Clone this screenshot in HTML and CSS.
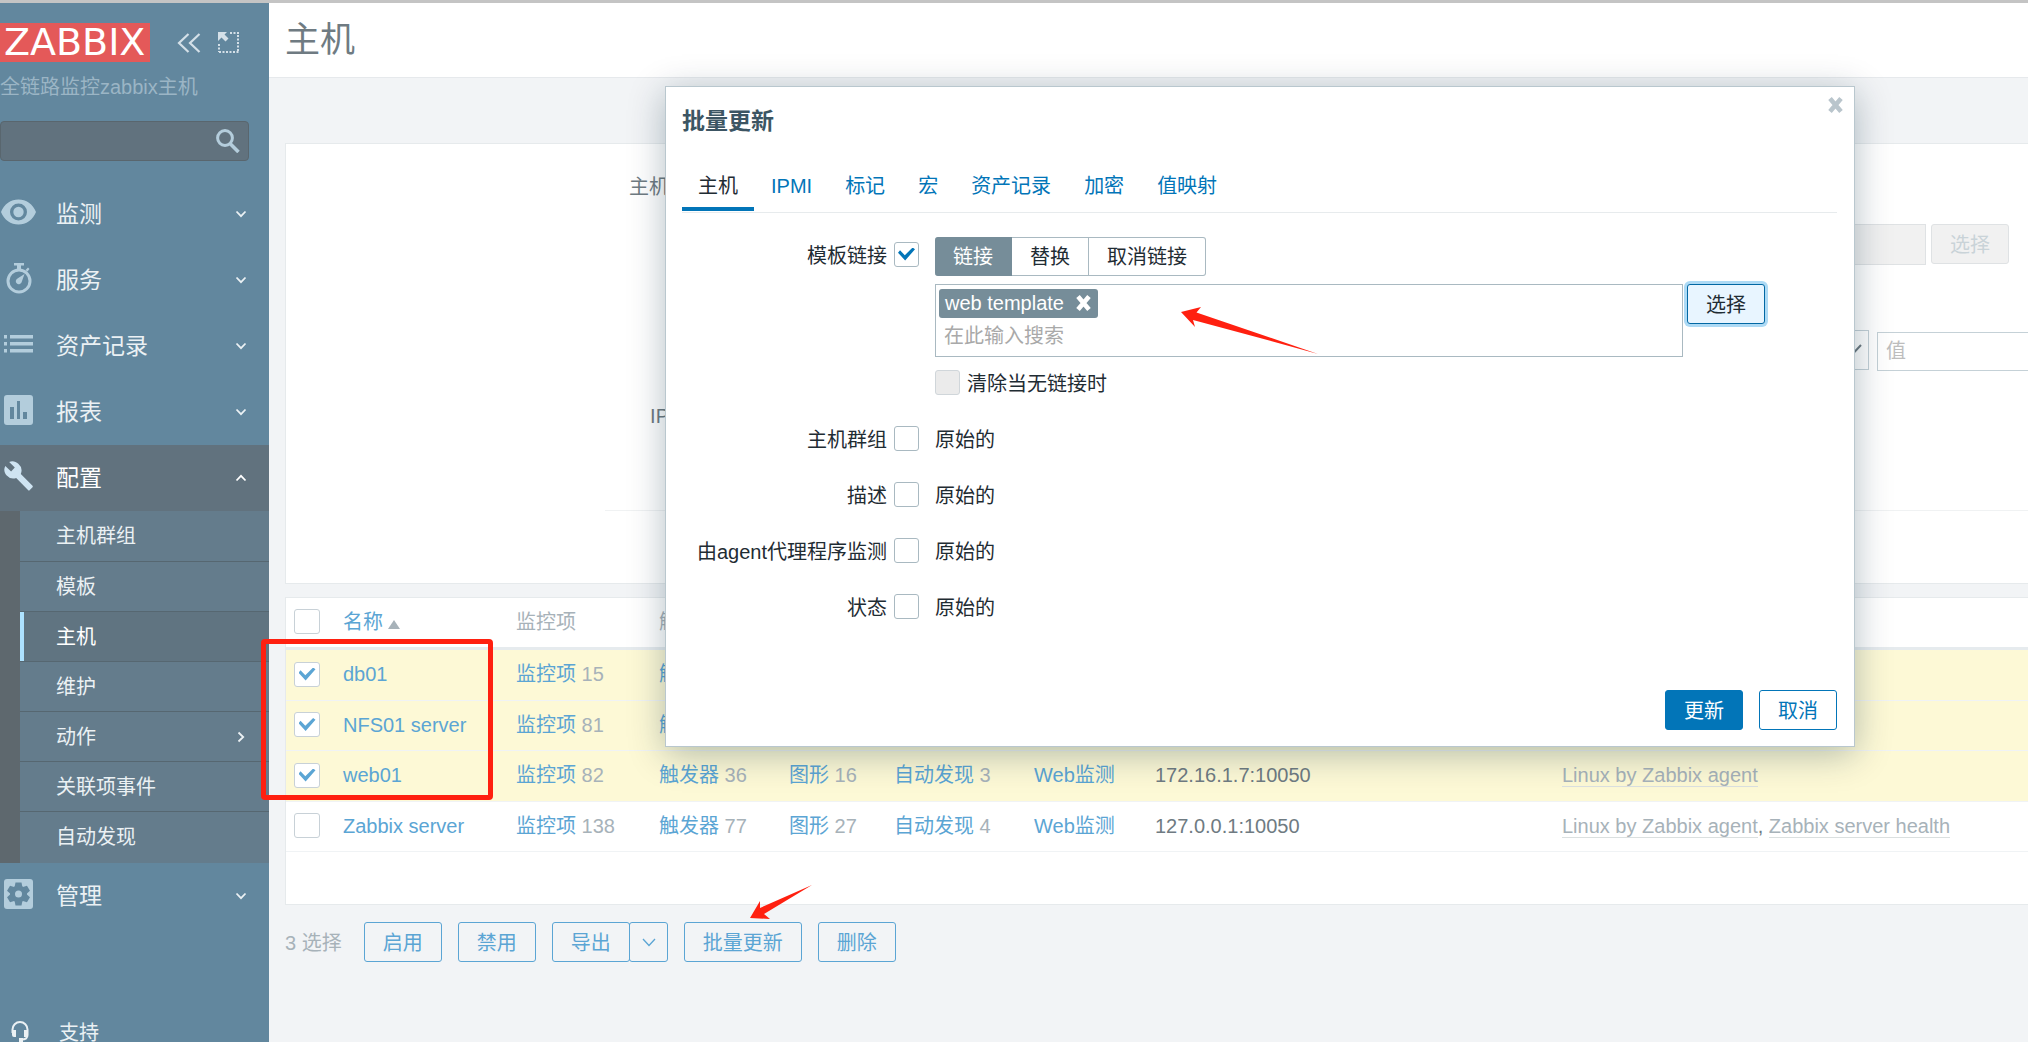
FILE: index.html
```html
<!DOCTYPE html>
<html lang="zh-CN">
<head>
<meta charset="utf-8">
<title>主机</title>
<link rel="stylesheet" href="styles.css">
</head>
<body>
<svg class="defs" aria-hidden="true">
  <symbol id="chev-down" viewBox="0 0 12 8"><path d="M1.500 1.500 6 6.200l4.500-4.700" fill="none" stroke="currentColor" stroke-width="1.800"/></symbol>
  <symbol id="cross" viewBox="0 0 16 16"><path d="M2.500 1.500 13.500 14.500M13.500 1.500 2.500 14.500" fill="none" stroke="currentColor" stroke-width="4.600"/></symbol>
</svg>
<div class="app">
  <aside class="sidebar">
    <div class="brand">
      <a class="logo" href="#">ZABBIX</a>
      <button class="icon-btn" aria-label="收起"><svg width="24" height="20" viewBox="0 0 24 20"><path d="M11.500 1 2 10l9.500 9M22.500 1 13 10l9.500 9" fill="none" stroke="currentColor" stroke-width="2.200"/></svg></button>
      <button class="icon-btn" aria-label="全屏"><svg width="21" height="21" viewBox="0 0 21 21"><path d="M0 0h9L6.500 2.500l4 4-3 3-4-4L0 9z" fill="currentColor"/><path d="M12 1h9M20 3v17M1 12v8M1 20h20" fill="none" stroke="currentColor" stroke-width="2" stroke-dasharray="2 1.500"/></svg></button>
    </div>
    <div class="server-name">全链路监控zabbix主机</div>
    <form class="search">
      <input type="text" aria-label="搜索">
      <button type="button" aria-label="搜索"><svg width="24" height="24" viewBox="0 0 24 24"><circle cx="9" cy="9" r="7.400" fill="none" stroke="currentColor" stroke-width="3"/><path d="M14 14.500 22.500 23" fill="none" stroke="currentColor" stroke-width="3.600"/></svg></button>
    </form>
    <nav>
      <a class="nav-item" href="#"><span class="nav-icon"><svg width="35" height="26" viewBox="0 0 35 26"><path fill="currentColor" fill-rule="evenodd" d="M0 13C3 5 10 .5 17.500.5S32 5 35 13c-3 8-10 12.500-17.500 12.500S3 21 0 13zm9 0a8.500 8.500 0 1 0 17 0 8.500 8.500 0 1 0-17 0z"/><circle cx="17.500" cy="13" r="5.200" fill="currentColor"/></svg></span>监测<svg class="chev"><use href="#chev-down"/></svg></a>
      <a class="nav-item" href="#"><span class="nav-icon"><svg width="26" height="31" viewBox="0 0 26 31"><circle cx="13" cy="18" r="11" fill="none" stroke="currentColor" stroke-width="3"/><path d="M8 0h10v2.500h-3V6h-4V2.500H8zM19.500 7l2.500-2.500L23.500 6 21.500 8.500zM18.500 11 15.500 19.500a3 3 0 1 1-4-4z" fill="currentColor"/></svg></span>服务<svg class="chev"><use href="#chev-down"/></svg></a>
      <a class="nav-item" href="#"><span class="nav-icon"><svg width="29" height="18" viewBox="0 0 29 18"><path d="M0 0h3v3.500H0zM6 0h23v3.500H6zM0 7h3v3.500H0zM6 7h23v3.500H6zM0 14h3v3.500H0zM6 14h23v3.500H6z" fill="currentColor"/></svg></span>资产记录<svg class="chev"><use href="#chev-down"/></svg></a>
      <a class="nav-item" href="#"><span class="nav-icon"><svg width="29" height="30" viewBox="0 0 29 30"><path fill="currentColor" fill-rule="evenodd" d="M3 0h23a3 3 0 0 1 3 3v24a3 3 0 0 1-3 3H3a3 3 0 0 1-3-3V3a3 3 0 0 1 3-3zm3 12v12h4V12zm7-6v18h3V6zm6 11v7h4v-7z"/></svg></span>报表<svg class="chev"><use href="#chev-down"/></svg></a>
      <a class="nav-item open" href="#"><span class="nav-icon"><svg width="29" height="30" viewBox="0 0 29 30"><path fill="currentColor" d="M28.300 24.500 16.800 13a9 9 0 0 0-2.500-10.200C11.800.3 8.300-.4 5.200.9l5.600 5.600-3.700 4L1.300 4.900C-.5 8.200.2 12 2.700 14.500a9 9 0 0 0 9.500 2.500L24 29c.5.700 1.300.7 1.800 0l2.500-2.500c.7-.6.7-1.500 0-2z"/></svg></span>配置<svg class="chev up"><use href="#chev-down"/></svg></a>
      <ul class="submenu">
        <li><a href="#">主机群组</a></li>
        <li><a href="#">模板</a></li>
        <li class="selected"><a href="#">主机</a></li>
        <li><a href="#">维护</a></li>
        <li><a href="#">动作<svg class="chev right"><use href="#chev-down"/></svg></a></li>
        <li><a href="#">关联项事件</a></li>
        <li><a href="#">自动发现</a></li>
      </ul>
      <a class="nav-item" href="#"><span class="nav-icon"><svg width="29" height="30" viewBox="0 0 29 30"><rect width="29" height="30" rx="3" fill="currentColor"/><g class="gear"><circle cx="14.500" cy="15" r="8.500"/><path id="tooth" d="M11.500 3.500h6l1 5h-8zM11.500 26.500h6l1-5h-8z"/><use href="#tooth" transform="rotate(60 14.500 15)"/><use href="#tooth" transform="rotate(120 14.500 15)"/></g><circle cx="14.500" cy="15" r="3.500" fill="currentColor"/></svg></span>管理<svg class="chev"><use href="#chev-down"/></svg></a>
    </nav>
    <a class="support" href="#"><svg width="18" height="22" viewBox="0 0 18 22"><path d="M1.500 12V8.500a7.500 7.500 0 0 1 15 0V14c0 3-2 4.500-6 4.500" fill="none" stroke="currentColor" stroke-width="2"/><path d="M1 9h4v7H3q-2 0-2-2zM13 9h4v5q0 2-2 2h-2zM8 17h4v4H8z" fill="currentColor"/></svg>支持</a>
  </aside>

  <main class="content">
    <header class="page-head"><h1>主机</h1></header>
    <section class="panel filter">
      <div class="filter-body">
        <div class="filter-labels">
          <label for="f-host">主机</label><input id="f-host" type="text">
          <label for="f-ip">IP</label><input id="f-ip" type="text">
        </div>
        <div class="filter-side">
          <div class="line"><input type="text" class="proxy" aria-label="代理" disabled><button class="btn-disabled" disabled>选择</button></div>
          <div class="line tags"><span class="select-wrap"><select aria-label="运算符"><option></option></select><svg width="16" height="10" viewBox="0 0 16 10"><path d="m1 1 7 7.500L15 1" fill="none" stroke="currentColor" stroke-width="2"/></svg></span><input type="text" class="tag-value" placeholder="值" aria-label="值"></div>
        </div>
      </div>
      <div class="filter-foot"></div>
    </section>

    <section class="panel hosts">
      <table>
        <colgroup><col class="c-check"><col class="c-name"><col class="c-items"><col class="c-trig"><col class="c-graph"><col class="c-disc"><col class="c-web"><col class="c-ip"><col></colgroup>
        <thead>
          <tr><th><input type="checkbox" aria-label="全选"></th><th><a href="#">名称</a><span class="sort"></span></th><th>监控项</th><th>触发器</th><th></th><th></th><th></th><th></th><th></th></tr>
        </thead>
        <tbody>
          <tr class="picked"><td><input type="checkbox" checked aria-label="db01"></td><td><a href="#">db01</a></td><td><a href="#">监控项</a> 15</td><td><a href="#">触发器</a></td><td></td><td></td><td></td><td></td><td></td></tr>
          <tr class="picked"><td><input type="checkbox" checked aria-label="NFS01 server"></td><td><a href="#">NFS01 server</a></td><td><a href="#">监控项</a> 81</td><td><a href="#">触发器</a></td><td></td><td></td><td></td><td></td><td></td></tr>
          <tr class="picked"><td><input type="checkbox" checked aria-label="web01"></td><td><a href="#">web01</a></td><td><a href="#">监控项</a> 82</td><td><a href="#">触发器</a> 36</td><td><a href="#">图形</a> 16</td><td><a href="#">自动发现</a> 3</td><td><a href="#">Web监测</a></td><td class="dark">172.16.1.7:10050</td><td><a class="tpl" href="#">Linux by Zabbix agent</a></td></tr>
          <tr><td><input type="checkbox" aria-label="Zabbix server"></td><td><a href="#">Zabbix server</a></td><td><a href="#">监控项</a> 138</td><td><a href="#">触发器</a> 77</td><td><a href="#">图形</a> 27</td><td><a href="#">自动发现</a> 4</td><td><a href="#">Web监测</a></td><td class="dark">127.0.0.1:10050</td><td><a class="tpl" href="#">Linux by Zabbix agent</a><span class="dark">,</span> <a class="tpl" href="#">Zabbix server health</a></td></tr>
        </tbody>
      </table>
    </section>

    <div class="actions">
      <span class="count">3 选择</span>
      <button>启用</button>
      <button>禁用</button>
      <span class="split"><button>导出</button><button class="more" aria-label="更多"><svg width="14" height="9" viewBox="0 0 14 9"><path d="m1 1 6 6.500L13 1" fill="none" stroke="currentColor" stroke-width="1.300"/></svg></button></span>
      <button>批量更新</button>
      <button>删除</button>
    </div>
  </main>
</div>

<div class="modal" role="dialog" aria-labelledby="dlg-title">
  <button class="close" aria-label="关闭"><svg width="17" height="16"><use href="#cross"/></svg></button>
  <h2 id="dlg-title">批量更新</h2>
  <div class="tabs">
    <a class="active" href="#">主机</a><a href="#">IPMI</a><a href="#">标记</a><a href="#">宏</a><a href="#">资产记录</a><a href="#">加密</a><a href="#">值映射</a>
  </div>
  <form class="form">
    <div class="lab"><label for="m-tpl">模板链接</label><input id="m-tpl" type="checkbox" checked></div>
    <div class="tpl-field">
      <div class="segments"><button type="button" class="on">链接</button><button type="button">替换</button><button type="button">取消链接</button></div>
      <div class="picker">
        <div class="multi"><span class="tag">web template<button type="button" aria-label="移除"><svg width="17" height="16"><use href="#cross"/></svg></button></span><input type="text" placeholder="在此输入搜索" aria-label="模板"></div>
        <button type="button" class="choose">选择</button>
      </div>
      <div class="clear"><input id="m-clear" type="checkbox" disabled><label for="m-clear">清除当无链接时</label></div>
    </div>
    <div class="lab"><label for="m-grp">主机群组</label><input id="m-grp" type="checkbox"></div><div class="val">原始的</div>
    <div class="lab"><label for="m-desc">描述</label><input id="m-desc" type="checkbox"></div><div class="val">原始的</div>
    <div class="lab"><label for="m-proxy">由agent代理程序监测</label><input id="m-proxy" type="checkbox"></div><div class="val">原始的</div>
    <div class="lab"><label for="m-stat">状态</label><input id="m-stat" type="checkbox"></div><div class="val">原始的</div>
  </form>
  <div class="modal-foot"><button class="primary">更新</button><button>取消</button></div>
</div>

<div class="mark-box"></div>
<svg class="mark-arrow arrow-field" width="140" height="50" viewBox="0 0 140 50"><path d="M1 6 21 1l-4.500 5.500L138 48 80 32 13 14l2 7z" fill="#ff2010"/></svg>
<svg class="mark-arrow arrow-button" width="64" height="36" viewBox="0 0 64 36"><path d="m1 33 10-17v7L63 0 15 29l6 5z" fill="#ff2010"/></svg>
</body>
</html>
```
FILE: styles.css
```css
* { box-sizing: border-box; }

body {
  margin: 0;
  height: 100vh;
  overflow: hidden;
  position: relative;
  font: 20px/24px "Liberation Sans", "Noto Sans CJK SC", sans-serif;
  color: #1f2c33;
  background: #f2f4f6;
  border-top: 3px solid #c4c4c4;
}

a { text-decoration: none; color: inherit; }
button, input, select { font: inherit; color: inherit; margin: 0; }
button { cursor: pointer; padding: 0; border: 0; background: none; }
svg { display: block; flex: none; }
.defs { position: absolute; width: 0; height: 0; }

.app { display: flex; height: 100%; }

/* Sidebar */
.sidebar {
  flex: none;
  width: 269px;
  background: #62879e;
  color: #ebf1f4;
  overflow: hidden;
}
.brand { display: flex; align-items: center; padding-top: 20px; }
.logo {
  width: 150px;
  height: 39px;
  margin-right: 27px;
  padding-left: 4px;
  background: #e45959;
  color: #fff;
  font: 38px/39px "DejaVu Sans", sans-serif;
}
.icon-btn { color: #d4e0e8; margin-right: 17px; }
.server-name { margin-top: 13px; color: #9bb5c5; }
.search {
  display: flex;
  align-items: center;
  width: 249px;
  height: 40px;
  margin-top: 22px;
  padding-right: 8px;
  background: #61727e;
  border: 1px solid #59666e;
  border-radius: 4px;
}
.search input { flex: 1; min-width: 0; border: 0; background: none; outline: 0; }
.search button { color: #b4cddc; }
nav { margin-top: 20px; }
.nav-item {
  display: flex;
  align-items: center;
  height: 66px;
  padding-right: 22px;
  font-size: 23px;
}
.nav-icon { display: flex; justify-content: center; width: 37px; margin: 0 19px 4px 0; color: #b3cddc; }
.chev { width: 12px; height: 8px; margin-left: auto; }
.chev.up { transform: rotate(180deg); }
.chev.right { transform: rotate(-90deg); }
.open { background: #61727e; color: #fff; }
.open .nav-icon { color: #cfe4f2; }
.gear { fill: #62879e; }
.submenu {
  list-style: none;
  margin: 0;
  padding: 0 0 2px;
  border-left: 20px solid #5e686e;
  background: #647c8c;
}
.submenu li { height: 50px; }
.submenu li + li { border-top: 1px solid #566771; }
.submenu a { display: flex; align-items: center; height: 100%; padding: 0 22px 0 36px; }
.submenu .selected { background: #607481; color: #fff; }
.submenu .selected a { border-left: 4px solid #ade2ff; padding-left: 32px; }
.support { display: flex; gap: 30px; padding-left: 11px; margin-top: 92px; }

/* Page */
.content { flex: 1; min-width: 0; overflow: hidden; }
.page-head { height: 75px; padding-left: 16px; background: #fff; border-bottom: 1px solid #e6e9ec; }
h1 { margin: 0; font-size: 35px; line-height: 74px; font-weight: 400; color: #6f7b82; }
.panel { margin-left: 16px; background: #fff; border: 1px solid #e6eaec; border-right: 0; }
.filter { margin-top: 65px; height: 441px; display: flex; flex-direction: column; }
.filter-body { flex: 1; display: flex; justify-content: space-between; }
.filter-labels {
  display: grid;
  grid-template-columns: 383px 300px;
  grid-auto-rows: 40px;
  gap: 189px 10px;
  padding-top: 23px;
  align-items: center;
  color: #6f7b82;
}
.filter-labels label { text-align: right; }
.filter-labels input { height: 40px; border: 1px solid #c5d1d7; }
.filter-side { width: 328px; padding-top: 80px; }
.line { display: flex; gap: 5px; height: 41px; }
.proxy { width: 226px; background: #f1f1f1; border: 1px solid #dfe2e4; }
.btn-disabled { width: 78px; height: 40px; padding-top: 2px; background: #f1f1f1; border: 1px solid #dfe2e4; border-radius: 3px; color: #c9d3d8; }
.tags { gap: 8px; margin-top: 65px; }
.select-wrap { position: relative; width: 169px; height: 40px; }
.select-wrap select { appearance: none; width: 100%; height: 100%; border: 1px solid #c5d1d7; background: #fff; }
.select-wrap svg { position: absolute; right: 7px; top: 14px; color: #6f7b82; }
.tag-value { flex: 1; align-self: flex-end; min-width: 0; height: 39px; padding: 0 8px; margin-right: -40px; border: 1px solid #c5d1d7; }
input::placeholder { color: #a9a9a9; opacity: 1; }
.tag-value::placeholder { color: #bdbdbd; }
.filter-foot { height: 73px; margin-left: 319px; border-top: 1px solid #f0f2f3; }

.hosts { margin-top: 13px; height: 308px; }
table { width: 100%; table-layout: fixed; border-collapse: separate; border-spacing: 0; color: #a7b2b9; }
.c-check { width: 49px; }
.c-name { width: 173px; }
.c-items { width: 143px; }
.c-trig { width: 130px; }
.c-graph { width: 105px; }
.c-disc { width: 140px; }
.c-web { width: 121px; }
.c-ip { width: 407px; }
th, td { padding: 0 0 2px 8px; text-align: left; font-weight: 400; white-space: nowrap; }
th { height: 52px; border-bottom: 3px solid #e6ebee; }
td { height: 50px; border-bottom: 1px solid #f0f3f5; }
tr:nth-child(odd) td { height: 51px; }
table a { color: #5ba5d4; }
.picked { background: #fdf9d6; }
.dark { color: #6f7b82; }
table .tpl { color: #a7b2b9; border-bottom: 1px solid #dbe0e0; }
.sort {
  display: inline-block;
  margin-left: 5px;
  border: 6px solid transparent;
  border-top: 0;
  border-bottom: 9px solid #a7b2b9;
}

input[type="checkbox"] {
  appearance: none;
  display: flex;
  align-items: center;
  justify-content: center;
  flex: none;
  width: 25px;
  height: 25px;
  background: #fff;
  border: 1px solid #a9b9c1;
  border-radius: 3px;
}
input[type="checkbox"]:checked::before {
  content: "";
  width: 17px;
  height: 13px;
  background: #0275b8;
  clip-path: polygon(0 40%, 12% 22%, 40% 60%, 86% 0, 100% 14%, 42% 100%);
}
input[type="checkbox"]:disabled { background: #ebebeb; border-color: #d0d6da; }
table input[type="checkbox"] { width: 26px; border-color: #c8d1d7; }
table input[type="checkbox"]:checked::before { background: #5ba5d4; }

.actions { display: flex; gap: 16px; margin: 17px 0 0 16px; }
.count { margin-right: 6px; line-height: 42px; color: #a7b2b9; }
.actions button { height: 40px; padding: 2px 18px 0; border: 1px solid #5ba5d4; border-radius: 3px; color: #5ba5d4; }
.split { display: flex; }
.actions .more { width: 39px; padding: 0 12px; margin-left: -1px; }

/* Dialog */
.modal {
  position: absolute;
  top: 83px;
  left: 665px;
  right: 173px;
  padding: 20px 17px 16px 16px;
  background: #fff;
  border: 1px solid #b9c7ce;
  box-shadow: 0 7px 34px rgba(0, 40, 60, .3);
}
.close { position: absolute; top: 10px; right: 10px; color: #b9c5cc; }
h2 { margin: 0; font-size: 23px; line-height: 28px; color: #3c5563; }
.tabs { display: flex; margin-top: 29px; border-bottom: 1px solid #e7ebed; color: #0275b8; }
.tabs a { height: 48px; line-height: 44px; padding: 0 16px; margin-right: 1px; }
.tabs .active { height: 47px; margin-bottom: 1px; color: #1f2c33; border-bottom: 4px solid #0275b8; }
.form { display: grid; grid-template-columns: 237px 1fr; gap: 20px 16px; margin-top: 24px; }
.lab, .clear { display: flex; align-items: center; gap: 7px; height: 36px; }
.lab { justify-content: flex-end; }
.lab label, .clear label { padding-top: 2px; }
.lab input, .clear input { margin-bottom: 2px; }
.val { padding-top: 2px; line-height: 34px; }
.tpl-field { display: grid; gap: 8px; }
.segments { display: flex; height: 39px; }
.segments button { padding: 0 18px; border: 1px solid #a9b9c1; border-left: 0; }
.segments .on { background: #768d99; border-color: #768d99; color: #fff; border-radius: 3px 0 0 3px; }
.segments button:last-child { border-radius: 0 3px 3px 0; }
.picker { display: flex; align-items: flex-start; gap: 4px; margin-right: 72px; }
.multi { flex: 1; min-width: 0; height: 73px; padding: 4px 3px; border: 1px solid #a9b9c1; }
.tag { display: flex; align-items: center; gap: 11px; width: max-content; height: 29px; padding: 0 6px 2px; background: #768d99; color: #fff; border-radius: 3px; }
.multi input { width: 100%; height: 34px; padding: 2px 5px 0; border: 0; outline: 0; }
.choose { width: 78px; height: 40px; padding-top: 2px; background: #e8f5ff; border: 1px solid #0268a4; border-radius: 3px; box-shadow: 0 0 0 3px #addaf5; }
.modal-foot { display: flex; justify-content: flex-end; gap: 16px; margin-top: 65px; }
.modal-foot button { width: 78px; height: 40px; padding-top: 2px; border: 1px solid #0275b8; border-radius: 3px; color: #0275b8; }
.modal-foot .primary { background: #0275b8; color: #fff; }

/* Red annotations drawn over the page */
.mark-box { position: absolute; left: 261px; top: 636px; width: 232px; height: 161px; border: 5px solid #ff2010; border-radius: 4px; }
.mark-arrow { position: absolute; }
.arrow-field { left: 1180px; top: 303px; }
.arrow-button { left: 749px; top: 882px; }
```
